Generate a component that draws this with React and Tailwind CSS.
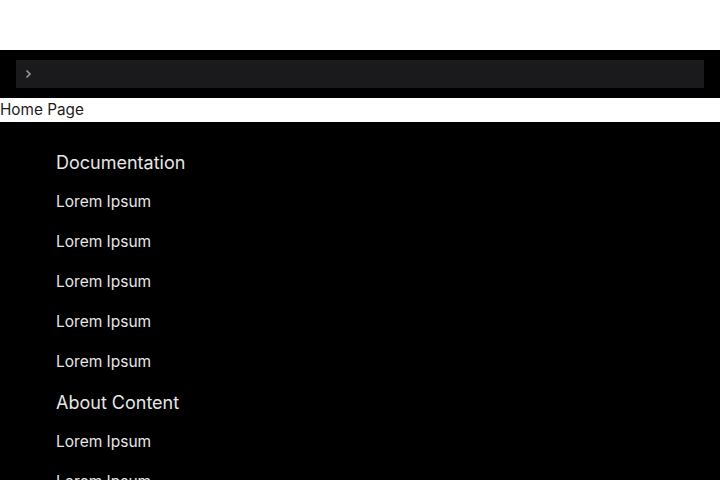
import React from "react";

const font = { fontFamily: "Inter, 'DejaVu Sans', sans-serif" };

function Section({ title, items }) {
  return (
    <div className="flex flex-col">
      <div className="h-10 flex items-center text-[18px] text-[#e6e6e6]">{title}</div>
      {items.map((t, i) => (
        <div key={i} className="h-10 flex items-center text-[15.5px] text-[#e6e6e6]">
          {t}
        </div>
      ))}
    </div>
  );
}

export default function App() {
  const lorem = ["Lorem Ipsum", "Lorem Ipsum", "Lorem Ipsum", "Lorem Ipsum", "Lorem Ipsum"];
  return (
    <div className="w-[720px] h-[480px] overflow-hidden bg-white" style={font}>
      <div className="h-[50px] bg-white" />
      <div className="h-[48px] bg-black px-4 py-[10px]">
        <div className="h-[28px] bg-[#1a1a1c] flex items-center pl-[8px]">
          <svg width="8" height="10" viewBox="0 0 8 10" fill="none">
            <path d="M2.5 1.5 L6 5 L2.5 8.5" stroke="#999999" strokeWidth="1.6" />
          </svg>
        </div>
      </div>
      <div className="h-[24px] bg-white flex items-center text-[15.3px] text-[#1c1c1c]">Home Page</div>
      <div className="bg-black pl-14 pt-5 pb-10">
        <Section title="Documentation" items={lorem} />
        <Section title="About Content" items={lorem} />
      </div>
    </div>
  );
}
